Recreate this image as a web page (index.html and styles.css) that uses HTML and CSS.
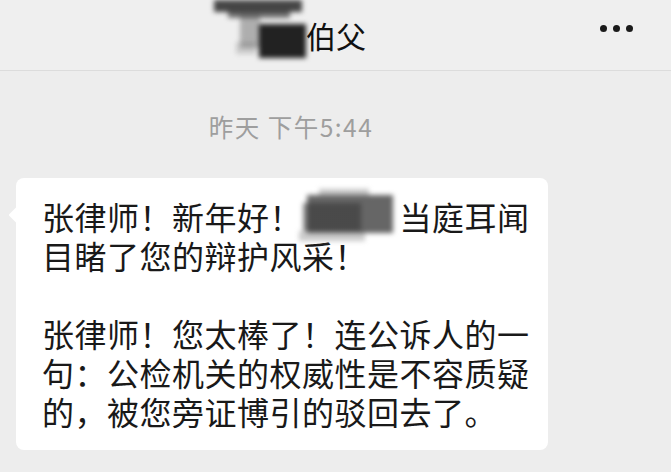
FILE: index.html
```html
<!DOCTYPE html>
<html>
<head>
    <meta charset="UTF-8">
    <title>聊天</title>
    <link rel="stylesheet" href="styles.css">
</head>
<body>
    <header class="topbar">
        <div class="title"><span class="redact redact-title"></span>伯父</div>
        <div class="more">
            <span class="dot"></span><span class="dot"></span><span class="dot"></span>
        </div>
    </header>

    <main class="chat">
        <div class="time">昨天 下午5:44</div>

        <div class="bubble">
            <p>张律师！新年好！<span class="redact redact-name"></span>当庭耳闻目睹了您的辩护风采！</p>
            <p>张律师！您太棒了！连公诉人的一句：公检机关的权威性是不容质疑的，被您旁证博引的驳回去了。</p>
        </div>
    </main>
</body>
</html>
```

FILE: styles.css
```css
body {
    margin: 0;
    background-color: #ededed;
    font-family: "Noto Sans CJK SC", "Noto Sans", sans-serif;
    color: #191919;
    overflow: hidden;
}

.topbar {
    height: 70px;
    background-color: #efefef;
    border-bottom: 1px solid #dcdcdc;
    display: flex;
    align-items: center;
}

.title {
    width: 582px;
    text-align: center;
    font-size: 30px;
    line-height: 70px;
    color: #111;
}

.more {
    margin-left: 18px;
    display: flex;
    gap: 6px;
    margin-top: -14px;
}

.dot {
    width: 7px;
    height: 7px;
    border-radius: 50%;
    background-color: #1a1a1a;
}

/* mancha de tinta sobre los nombres */
.redact {
    position: relative;
    display: inline-block;
    height: 1em;
    vertical-align: -0.12em;
}

.redact::after {
    content: "";
    position: absolute;
    filter: blur(2.5px);
    background-repeat: no-repeat;
}

.redact-title {
    width: 90px;
}

.redact-title::after {
    left: -2px;
    top: -22px;
    width: 92px;
    height: 60px;
    background-image:
        linear-gradient(rgba(22, 22, 22, 0.95), rgba(22, 22, 22, 0.95)),
        linear-gradient(rgba(40, 40, 40, 0.85), rgba(40, 40, 40, 0.85)),
        linear-gradient(rgba(60, 60, 60, 0.7), rgba(60, 60, 60, 0.7)),
        linear-gradient(rgba(110, 110, 110, 0.5), rgba(110, 110, 110, 0.5)),
        linear-gradient(rgba(150, 150, 150, 0.4), rgba(150, 150, 150, 0.4));
    background-position: 45px 24px, 0 0, 14px 10px, 26px 14px, 22px 42px;
    background-size: 47px 34px, 88px 12px, 62px 8px, 20px 34px, 20px 12px;
}

.redact-name {
    width: 97.5px;
}

.redact-name::after {
    left: -5px;
    top: -13px;
    width: 101px;
    height: 56px;
    background-image:
        linear-gradient(rgba(55, 55, 55, 0.6), rgba(55, 55, 55, 0.6)),
        linear-gradient(rgba(75, 75, 75, 0.85), rgba(75, 75, 75, 0.85)),
        linear-gradient(rgba(150, 150, 150, 0.5), rgba(150, 150, 150, 0.5)),
        linear-gradient(rgba(140, 140, 140, 0.5), rgba(140, 140, 140, 0.5));
    background-position: 6px 14px, 10px 6px, 2px 42px, 22px 0;
    background-size: 58px 28px, 86px 38px, 66px 10px, 50px 6px;
}

.chat {
    display: flex;
    flex-direction: column;
}

.time {
    width: 582px;
    margin-top: 44px;
    text-align: center;
    font-size: 24.5px;
    letter-spacing: 1.5px;
    line-height: 24px;
    color: #9e9e9e;
}

.bubble {
    position: relative;
    box-sizing: border-box;
    width: 532px;
    margin: 39px 0 0 16px;
    padding: 19px 18px 19px 26px;
    background-color: #fff;
    border-radius: 8px;
    font-size: 32px;
    letter-spacing: 0.5px;
    line-height: 39px;
}

.bubble::before {
    content: "";
    position: absolute;
    left: -5px;
    top: 31px;
    width: 12px;
    height: 12px;
    background-color: #fff;
    transform: rotate(45deg);
    border-radius: 1px;
}

.bubble p {
    margin: 0 0 39px;
}

.bubble p:last-child {
    margin-bottom: 0;
}
```
